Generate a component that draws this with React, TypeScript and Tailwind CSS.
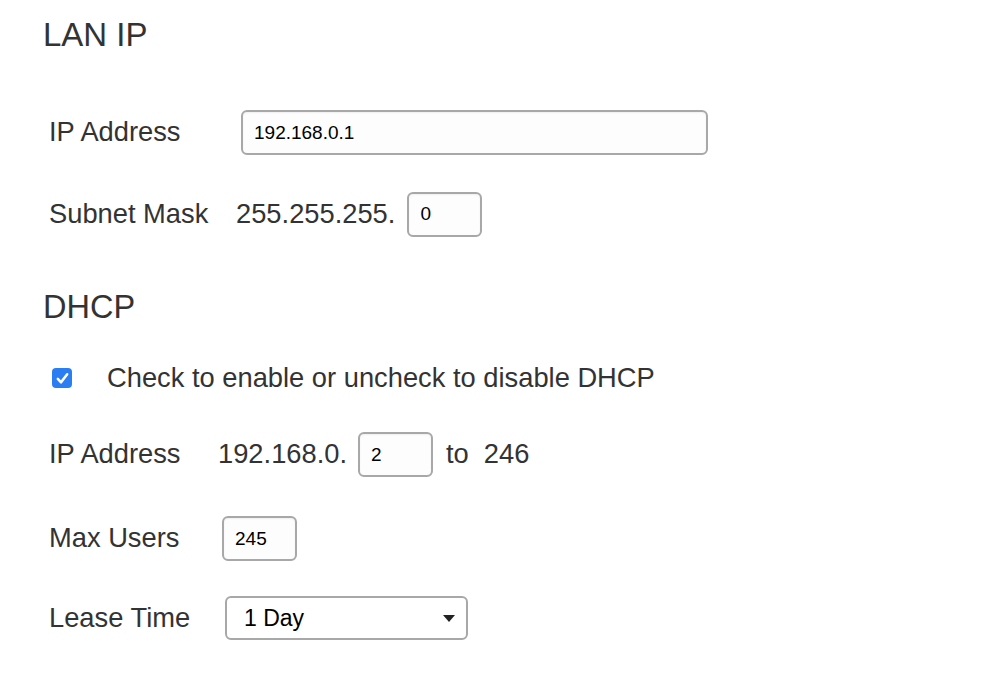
import { useState } from "react";

const font = { fontFamily: '"Liberation Sans", Arial, sans-serif' };

function Field({ value, width, onChange }: { value: string; width: string; onChange: (v: string) => void }) {
  return (
    <input
      value={value}
      onChange={(e) => onChange(e.target.value)}
      className={`${width} h-[45px] rounded-[6px] border-2 border-[#a8a8a8] bg-[#fdfdfd] px-[11px] text-[19px] text-black shadow-[inset_0_1px_2px_rgba(0,0,0,0.06)] outline-none`}
    />
  );
}

export default function App() {
  const [ip, setIp] = useState("192.168.0.1");
  const [mask, setMask] = useState("0");
  const [dhcp, setDhcp] = useState(true);
  const [start, setStart] = useState("2");
  const [users, setUsers] = useState("245");
  const [lease, setLease] = useState("1 Day");

  return (
    <div className="min-h-screen w-full bg-white text-[#333333]" style={font}>
      <div className="flex flex-col pl-[43px]">
        {/* LAN IP */}
        <h2 className="flex h-[70px] items-center text-[33px] font-normal">LAN IP</h2>

        <div className="mt-[40px] flex h-[45px] items-center pl-[6px]">
          <span className="w-[192px] text-[27.3px]">IP Address</span>
          <Field value={ip} width="w-[467px]" onChange={setIp} />
        </div>

        <div className="mt-[37px] flex h-[44px] items-center pl-[6px]">
          <span className="w-[187px] text-[27.3px]">Subnet Mask</span>
          <span className="mr-[12px] text-[27.3px]">255.255.255.</span>
          <Field value={mask} width="w-[75px]" onChange={setMask} />
        </div>

        {/* DHCP */}
        <h2 className="mt-[46px] flex h-[50px] items-center text-[32.5px] font-normal">DHCP</h2>

        <label className="mt-[31px] flex h-[30px] items-center pl-[9px]">
          <input
            type="checkbox"
            checked={dhcp}
            onChange={(e) => setDhcp(e.target.checked)}
            className="sr-only"
          />
          <span className="flex h-[20px] w-[20px] items-center justify-center rounded-[4px] bg-[#2b7df2]">
            {dhcp && (
              <svg viewBox="0 0 20 20" className="h-[17px] w-[17px]" fill="none">
                <path d="M4.5 10.5 L8.3 14.5 L15.5 5" stroke="white" strokeWidth="3" strokeLinecap="round" strokeLinejoin="round" />
              </svg>
            )}
          </span>
          <span className="ml-[35px] text-[27.3px]">Check to enable or uncheck to disable DHCP</span>
        </label>

        <div className="mt-[39px] flex h-[45px] items-center pl-[6px]">
          <span className="w-[169px] text-[27.3px]">IP Address</span>
          <span className="mr-[11px] text-[27.3px]">192.168.0.</span>
          <Field value={start} width="w-[75px]" onChange={setStart} />
          <span className="ml-[13px] text-[27.3px]">to</span>
          <span className="ml-[15px] text-[27.3px]">246</span>
        </div>

        <div className="mt-[39px] flex h-[45px] items-center pl-[6px]">
          <span className="w-[173px] text-[27.3px]">Max Users</span>
          <Field value={users} width="w-[75px]" onChange={setUsers} />
        </div>

        <div className="mt-[35px] flex h-[44px] items-center pl-[6px]">
          <span className="w-[176px] text-[27.3px]">Lease Time</span>
          <div className="relative">
            <select
              value={lease}
              onChange={(e) => setLease(e.target.value)}
              className="h-[44px] w-[243px] appearance-none rounded-[6px] border-2 border-[#a8a8a8] bg-white pl-[17px] text-[23px] text-black outline-none"
            >
              <option>1 Day</option>
              <option>2 Days</option>
              <option>1 Week</option>
            </select>
            <svg viewBox="0 0 12 7" className="pointer-events-none absolute right-[13px] top-[19px] h-[7px] w-[12px]">
              <path d="M0 0 H12 L6 7 Z" fill="#222" />
            </svg>
          </div>
        </div>
      </div>
    </div>
  );
}
